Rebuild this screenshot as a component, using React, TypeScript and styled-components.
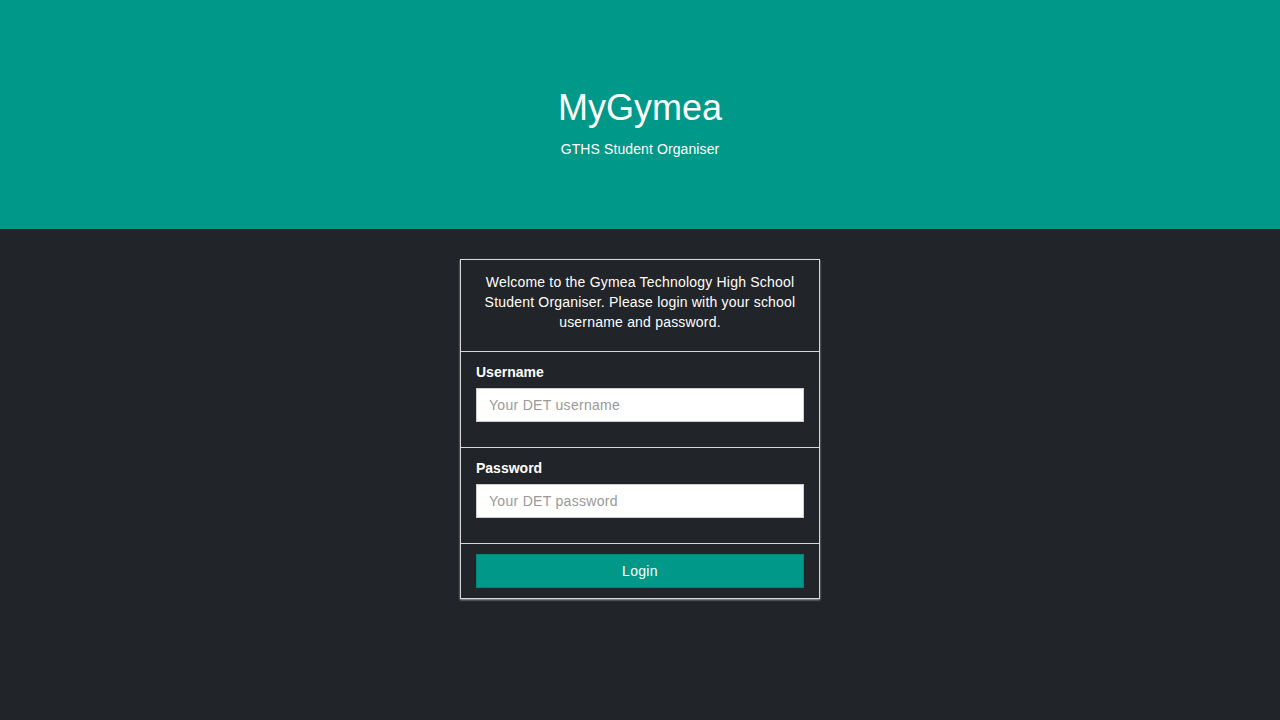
import React from "react";
import styled, { createGlobalStyle } from "styled-components";

const GlobalStyle = createGlobalStyle`
  html, body {
    margin: 0;
    padding: 0;
    background-color: #212428;
    font-family: "Liberation Sans", Arial, sans-serif;
    color: #ffffff;
  }
  * {
    box-sizing: border-box;
  }
`;

function App() {
  return (
    <Page>
      <GlobalStyle />
      <Header>
        <Title>MyGymea</Title>
        <Subtitle>GTHS Student Organiser</Subtitle>
      </Header>
      <Main>
        <Card>
          <IntroSection>
            <Intro>
              Welcome to the Gymea Technology High School Student Organiser.
              Please login with your school username and password.
            </Intro>
          </IntroSection>
          <Section>
            <Label htmlFor="username">Username</Label>
            <Input id="username" type="text" placeholder="Your DET username" />
          </Section>
          <Section>
            <Label htmlFor="password">Password</Label>
            <Input id="password" type="password" placeholder="Your DET password" />
          </Section>
          <ButtonSection>
            <LoginButton>Login</LoginButton>
          </ButtonSection>
        </Card>
      </Main>
    </Page>
  );
}

const Page = styled.div`
  width: 100%;
  min-height: 720px;
  background-color: #212428;
`;

const Header = styled.header`
  height: 229px;
  background-color: #009888;
  display: flex;
  flex-direction: column;
  align-items: center;
  padding-top: 86px;
`;

const Title = styled.h1`
  margin: 0;
  font-size: 36px;
  font-weight: 400;
  line-height: 44px;
`;

const Subtitle = styled.div`
  margin-top: 11px;
  font-size: 14px;
  line-height: 16px;
  letter-spacing: 0.1px;
`;

const Main = styled.main`
  display: flex;
  justify-content: center;
  padding-top: 30px;
`;

const Card = styled.div`
  width: 360px;
  border: 1px solid #d8d8d8;
  box-shadow: 0 1px 2px rgba(200, 200, 200, 0.8);
  display: flex;
  flex-direction: column;
`;

const Section = styled.div`
  padding: 11px 15px 25px;
  border-bottom: 1px solid #d8d8d8;
  display: flex;
  flex-direction: column;
`;

const IntroSection = styled.div`
  padding: 12px 15px 19px;
  border-bottom: 1px solid #d8d8d8;
`;

const Intro = styled.p`
  margin: 0;
  text-align: center;
  font-size: 14px;
  line-height: 20px;
  letter-spacing: 0.2px;
`;

const Label = styled.label`
  font-size: 14px;
  font-weight: 700;
  line-height: 18px;
  margin-bottom: 7px;
`;

const Input = styled.input`
  height: 34px;
  width: 100%;
  border: 1px solid #cccccc;
  background: #ffffff;
  padding: 0 12px;
  font-family: "Liberation Sans", Arial, sans-serif;
  font-size: 14px;
  letter-spacing: 0.3px;
  color: #333;
  outline: none;
  &::placeholder {
    color: #999999;
  }
`;

const ButtonSection = styled.div`
  padding: 10px 15px 10px;
`;

const LoginButton = styled.button`
  width: 100%;
  height: 34px;
  border: 1px solid #00867a;
  background-color: #009888;
  color: #ffffff;
  font-family: "Liberation Sans", Arial, sans-serif;
  font-size: 14px;
  letter-spacing: 0.3px;
  cursor: pointer;
`;

export default App;
